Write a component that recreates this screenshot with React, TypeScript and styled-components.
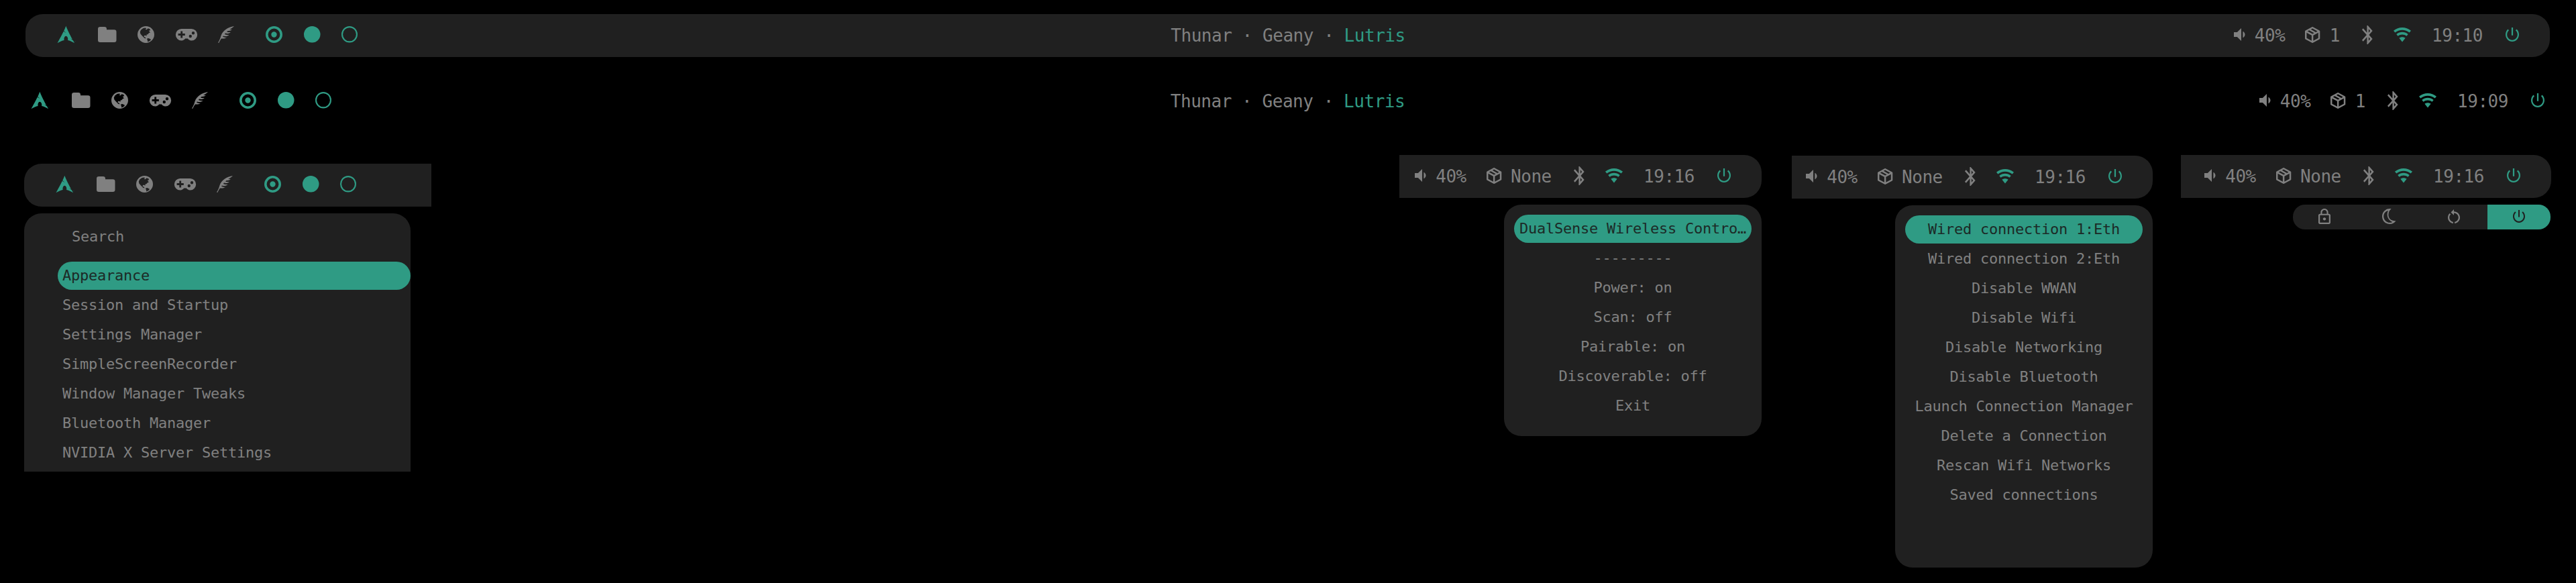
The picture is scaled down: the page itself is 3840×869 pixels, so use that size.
import React from "react";
import styled, { createGlobalStyle } from "styled-components";
import { SiArchlinux } from "react-icons/si";

const PANEL = "#202020";
const GREY = "#808080";
const ACCENT = "#2f9b84";

const GlobalStyle = createGlobalStyle`
  * { box-sizing: border-box; }
  html, body { margin: 0; background: #000; }
  body { font-family: "DejaVu Sans Mono", monospace; color: ${GREY}; }
`;

const Desktop = styled.main`
  width: 3840px;
  height: 869px;
  padding-top: 21px;
  overflow: hidden;
  background: #000;
`;

type Ends = "both" | "left" | "right" | "none";
const corner: Record<Ends, string> = {
  both: "26px",
  left: "26px 0 0 26px",
  right: "0 26px 26px 0",
  none: "0",
};

const Bar = styled.header<{ $ends: Ends }>`
  display: grid;
  grid-template-columns: 1fr auto 1fr;
  align-items: center;
  height: 64px;
  padding: 0 46px 0 47px;
  border-radius: ${(p) => corner[p.$ends]};
  background: ${(p) => (p.$ends === "none" ? "transparent" : PANEL)};
  font-size: 26px;
  letter-spacing: -0.46px;
  line-height: 64px;
  white-space: pre;
`;

const FloatingBar = styled(Bar)`
  margin: 0 39px 0 38px;
`;

const FlatBar = styled(Bar)`
  margin: 34px 1px 48px -1px;
`;

const TrayBar = styled(Bar)`
  grid-template-columns: 0 0 1fr;
  padding-left: 0;
`;

const Group = styled.div`
  display: flex;
  align-items: center;
`;

const Tray = styled(Group)`
  grid-column: 3;
  justify-content: flex-end;
`;

const Accent = styled.span`
  color: ${ACCENT};
`;

const Icon = styled.svg<{ $gap?: number; $accent?: boolean }>`
  flex: none;
  display: block;
  margin: 0 0 3px ${(p) => p.$gap ?? 0}px;
  fill: currentColor;
  color: ${(p) => (p.$accent ? ACCENT : "inherit")};
  overflow: visible;
`;

const ArchLogo = styled(SiArchlinux)`
  flex: none;
  width: 28px;
  height: 27px;
  margin-bottom: 3px;
  color: ${ACCENT};
`;

const Label = styled.span<{ $gap: number; $width: number }>`
  flex: none;
  width: ${(p) => p.$width}px;
  margin-left: ${(p) => p.$gap}px;
`;

const Panels = styled.section`
  display: flex;
  align-items: flex-start;
  padding-left: 36px;
`;

const Cluster = styled.div<{ $width: number; $left?: number; $top?: number }>`
  flex: none;
  display: flex;
  flex-direction: column;
  gap: 10px;
  width: ${(p) => p.$width}px;
  margin: ${(p) => p.$top ?? 0}px 0 0 ${(p) => p.$left ?? 0}px;
`;

const Menu = styled.div<{ $height: number }>`
  display: flex;
  flex-direction: column;
  gap: 2px;
  align-self: flex-end;
  width: 384px;
  height: ${(p) => p.$height}px;
  padding: 15px;
  border-radius: 26px;
  background: ${PANEL};
  font-size: 22px;
  letter-spacing: -0.25px;
  text-align: center;
`;

const Launcher = styled(Menu)`
  align-self: flex-start;
  width: 576px;
  padding: 14px 0 0 50px;
  border-radius: 26px 26px 0 0;
  text-align: left;
`;

const Search = styled.div`
  height: 42px;
  margin-bottom: 14px;
  padding-left: 21px;
  line-height: 42px;
`;

const Item = styled.div<{ $active?: boolean }>`
  flex: none;
  height: 42px;
  padding: 0 7px;
  border-radius: 21px;
  background: ${(p) => (p.$active ? ACCENT : "transparent")};
  color: ${(p) => (p.$active ? "#1c2a27" : GREY)};
  line-height: 42px;
  white-space: pre;
`;

const PowerMenu = styled.div`
  display: grid;
  grid-template-columns: repeat(4, 94px);
  justify-content: space-between;
  align-self: flex-end;
  width: 384px;
  height: 37px;
  margin-right: 1px;
  border-radius: 18px;
  background: ${PANEL};
  overflow: hidden;
`;

const PowerCell = styled.div<{ $active?: boolean }>`
  display: flex;
  align-items: center;
  justify-content: center;
  background: ${(p) => (p.$active ? ACCENT : "transparent")};
  color: ${(p) => (p.$active ? "#202020" : GREY)};
`;

type Shape = { box: string; w: number; h: number; d: string };

const shapes = {
  folder: {
    box: "0 0 27.5 23", w: 27.5, h: 23,
    d: "M3.4 0H9.6Q13 0 13 3.2V4.2H24.2Q27.5 4.2 27.5 7.4V19.8Q27.5 23 24.2 23H3.4Q0 23 0 19.8V3.2Q0 0 3.4 0Z",
  },
  globe: {
    box: "0 0 25 25", w: 25, h: 25,
    d: "M12.5 0A12.5 12.5 0 1 1 12.5 25A12.5 12.5 0 1 1 12.5 0ZM5.2 5.6L8.6 3.1L11.6 2.6L13.4 3.3L11.6 4.7L13.6 5.3L15.6 3.3L18.4 4.3L19.2 6.4L17.2 6.3L17.8 8.4L19.2 9.2L17 10.3L15.2 12.2L13.6 12.6L13.4 14.8L11.8 13.7L10 14L9.6 16L11.6 16.6L12.4 18.4L10.2 17.8L7 14.6L4.4 11.6L3.8 8.4ZM14 18.4L16.6 18L20 19.8L19 21.4L15.4 23.4L14.8 21Z",
  },
  gamepad: {
    box: "0 0 32 17.5", w: 32, h: 17.5,
    d: "M8.6 0H23.4A8.7 8.7 0 0 1 23.4 17.5C20.8 17.5 19.2 16.3 17.9 14.6H14.1C12.8 16.3 11.2 17.5 8.6 17.5A8.7 8.7 0 0 1 8.6 0ZM7.3 3.4V7.1H3.6V9.9H7.3V13.6H10.1V9.9H13.8V7.1H10.1V3.4ZM21.8 8.8A2.2 2.2 0 1 0 21.8 13.2A2.2 2.2 0 1 0 21.8 8.8ZM26 4.1A2.2 2.2 0 1 0 26 8.5A2.2 2.2 0 1 0 26 4.1Z",
  },
  feather: {
    box: "0 0 24 25", w: 24, h: 25,
    d: "M24 0C15 1.2 7 6.6 4.4 14.4C3.4 18 2 21.4 0 24.6L1.2 25C2.3 22.8 3.4 20.7 4.8 18.4C7.4 18.9 10.6 18.6 13 16.8C10.6 17.2 8.8 16.8 7 15.8L8 14.4C11 15.4 14.2 15 16.4 12.9C13.8 13.4 11.8 13 9.8 12L11 10.6C13.6 11.4 16.6 11 18.8 8.9C16.6 9.3 14.8 9 13 8.4L14.6 6.9C16.8 7.3 19.2 6.9 20.9 4.8C19.6 5.1 18.4 5.1 17.2 4.8C19.4 3.6 22 2.4 24 0Z",
  },
  target: {
    box: "0 0 25 25", w: 25, h: 25,
    d: "M12.5 0A12.5 12.5 0 1 1 12.5 25A12.5 12.5 0 1 1 12.5 0ZM12.5 3.6A8.9 8.9 0 1 0 12.5 21.4A8.9 8.9 0 1 0 12.5 3.6ZM12.5 8.3A4.2 4.2 0 1 1 12.5 16.7A4.2 4.2 0 1 1 12.5 8.3Z",
  },
  disc: { box: "0 0 24 24", w: 24.5, h: 24.5, d: "M12 0A12 12 0 1 1 12 24A12 12 0 1 1 12 0Z" },
  ring: {
    box: "0 0 24 24", w: 24, h: 24.5,
    d: "M12 0A12 12 0 1 1 12 24A12 12 0 1 1 12 0ZM12 2.1A9.9 9.9 0 1 0 12 21.9A9.9 9.9 0 1 0 12 2.1Z",
  },
  speaker: {
    box: "5 4 13.5 16", w: 16.5, h: 19,
    d: "M5 9v6h4l5 5V4L9 9H5zM16 7.97v8.05c1.48-.73 2.5-2.25 2.5-4.02 0-1.77-1.02-3.29-2.5-4.03z",
  },
  box: {
    box: "3 2 18 20", w: 22.3, h: 24,
    d: "M21 16.5C21 16.88 20.79 17.21 20.47 17.38L12.57 21.82C12.41 21.94 12.21 22 12 22C11.79 22 11.59 21.94 11.43 21.82L3.53 17.38C3.21 17.21 3 16.88 3 16.5V7.5C3 7.12 3.21 6.79 3.53 6.62L11.43 2.18C11.59 2.06 11.79 2 12 2C12.21 2 12.41 2.06 12.57 2.18L20.47 6.62C20.79 6.79 21 7.12 21 7.5V16.5M12 4.15L10.11 5.22L16 8.61L17.96 7.5L12 4.15M6.04 7.5L12 10.85L13.96 9.75L8.08 6.35L6.04 7.5M5 15.91L11 19.29V12.58L5 9.21V15.91M19 15.91V9.21L13 12.58V19.29L19 15.91Z",
  },
  bluetooth: {
    box: "5 2 12.71 20", w: 15.7, h: 28,
    d: "M17.71 7.71L12 2h-1v7.59L6.41 5 5 6.41 10.59 12 5 17.59 6.41 19 11 14.41V22h1l5.71-5.71-4.3-4.29 4.3-4.29zM13 5.83l1.88 1.88L13 9.59V5.83zm1.88 10.46L13 18.17v-3.76l1.88 1.88z",
  },
  wifi: {
    box: "0 0 26 21.5", w: 26, h: 21.5,
    d: "M0 4.7C7.4 -1.6 18.6 -1.6 26 4.7L23.7 7.5C17.6 2.4 8.4 2.4 2.3 7.5ZM4.3 10C9.4 5.8 16.6 5.8 21.7 10L19.5 12.8C15.6 9.8 10.4 9.8 6.5 12.8ZM8.4 15.8C11 13.8 15 13.8 17.6 15.8L13 21.5Z",
  },
  power: {
    box: "3 3 18 18", w: 20, h: 21,
    d: "M13 3h-2v10h2V3zm4.83 2.17l-1.42 1.42C17.99 7.86 19 9.81 19 12c0 3.87-3.13 7-7 7s-7-3.13-7-7c0-2.19 1.01-4.14 2.58-5.42L6.17 5.17C4.23 6.82 3 9.26 3 12c0 4.97 4.03 9 9 9s9-4.03 9-9c0-2.74-1.23-5.18-3.17-6.83z",
  },
  lock: {
    box: "4 1 16 21", w: 18, h: 23,
    d: "M12 17c1.1 0 2-.9 2-2s-.9-2-2-2-2 .9-2 2 .9 2 2 2zm6-9h-1V6c0-2.76-2.24-5-5-5S7 3.24 7 6v2H6c-1.1 0-2 .9-2 2v10c0 1.1.9 2 2 2h12c1.1 0 2-.9 2-2V10c0-1.1-.9-2-2-2zM8.9 6c0-1.71 1.39-3.1 3.1-3.1s3.1 1.39 3.1 3.1v2H8.9V6zM18 20H6V10h12v10z",
  },
  moon: {
    box: "0 0 20.5 23", w: 20.5, h: 23,
    d: "M13.6 0.3C5.8 -1 0 4.6 0 11.5C0 18.4 5.4 23 11.4 23C15.2 23 18.4 21.4 20.5 18.2C13.4 18.6 9.4 14.4 9.4 9.2C9.4 5.4 11 2.2 13.6 0.3ZM8.9 2.9C6.2 8.6 7.6 17 15.4 19.9C8.6 22.8 2.2 18 2.2 11.5C2.2 7.4 4.8 3.9 8.9 2.9Z",
  },
  restart: {
    box: "4 2 16 19", w: 18, h: 21,
    d: "M12 5V2L8 6l4 4V7c3.31 0 6 2.69 6 6 0 2.97-2.17 5.43-5 5.91v2.02c3.95-.49 7-3.85 7-7.93 0-4.42-3.58-8-8-8zM6 13c0-1.65.67-3.15 1.76-4.24L6.34 7.34C4.9 8.79 4 10.79 4 13c0 4.08 3.05 7.44 7 7.93v-2.02c-2.83-.48-5-2.94-5-5.91z",
  },
} satisfies Record<string, Shape>;

type GlyphProps = { name: keyof typeof shapes; gap?: number; accent?: boolean; scale?: number };

function Glyph({ name, gap, accent, scale = 1 }: GlyphProps) {
  const s = shapes[name];
  return (
    <Icon
      viewBox={s.box}
      width={s.w * scale}
      height={s.h * scale}
      preserveAspectRatio="none"
      $gap={gap}
      $accent={accent}
      aria-hidden
    >
      <path fillRule="evenodd" d={s.d} />
    </Icon>
  );
}

function Shortcuts() {
  return (
    <Group>
      <ArchLogo />
      <Glyph name="folder" gap={32.5} />
      <Glyph name="globe" gap={32} />
      <Glyph name="gamepad" gap={31.5} />
      <Glyph name="feather" gap={31.5} />
      <Glyph name="target" gap={47} accent />
      <Glyph name="disc" gap={32} accent />
      <Glyph name="ring" gap={31.5} accent />
    </Group>
  );
}

function Windows() {
  return (
    <span>
      Thunar · Geany · <Accent>Lutris</Accent>
    </span>
  );
}

function Status({ updates, time }: { updates: string; time: string }) {
  return (
    <Tray>
      <Glyph name="speaker" />
      <Label $gap={14.5} $width={45.5}>40%</Label>
      <Glyph name="box" gap={30} />
      <Label $gap={14} $width={updates.length * 15.2}>{updates}</Label>
      <Glyph name="bluetooth" gap={33} />
      <Glyph name="wifi" gap={31.5} accent />
      <Label $gap={31} $width={76}>{time}</Label>
      <Glyph name="power" gap={34} accent />
    </Tray>
  );
}

const apps = [
  "Appearance",
  "Session and Startup",
  "Settings Manager",
  "SimpleScreenRecorder",
  "Window Manager Tweaks",
  "Bluetooth Manager",
  "NVIDIA X Server Settings",
];

const bluetooth = [
  "DualSense Wireless Contro…",
  "---------",
  "Power: on",
  "Scan: off",
  "Pairable: on",
  "Discoverable: off",
  "Exit",
];

const network = [
  "Wired connection 1:Eth",
  "Wired connection 2:Eth",
  "Disable WWAN",
  "Disable Wifi",
  "Disable Networking",
  "Disable Bluetooth",
  "Launch Connection Manager",
  "Delete a Connection",
  "Rescan Wifi Networks",
  "Saved connections",
];

const Items = ({ labels }: { labels: string[] }) => (
  <>
    {labels.map((label, i) => (
      <Item key={label} $active={i === 0}>{label}</Item>
    ))}
  </>
);

export default function App() {
  return (
    <Desktop>
      <GlobalStyle />
      <FloatingBar $ends="both">
        <Shortcuts />
        <Windows />
        <Status updates="1" time="19:10" />
      </FloatingBar>
      <FlatBar $ends="none">
        <Shortcuts />
        <Windows />
        <Status updates="1" time="19:09" />
      </FlatBar>
      <Panels>
        <Cluster $width={607} $top={13}>
          <Bar $ends="left">
            <Shortcuts />
          </Bar>
          <Launcher $height={385}>
            <Search>Search</Search>
            <Items labels={apps} />
          </Launcher>
        </Cluster>
        <Cluster $width={540} $left={1443}>
          <TrayBar $ends="right">
            <Status updates="None" time="19:16" />
          </TrayBar>
          <Menu $height={345}>
            <Items labels={bluetooth} />
          </Menu>
        </Cluster>
        <Cluster $width={538} $left={45} $top={1}>
          <TrayBar $ends="right">
            <Status updates="None" time="19:16" />
          </TrayBar>
          <Menu $height={540}>
            <Items labels={network} />
          </Menu>
        </Cluster>
        <Cluster $width={552} $left={42}>
          <TrayBar $ends="right">
            <Status updates="None" time="19:16" />
          </TrayBar>
          <PowerMenu>
            <PowerCell><Glyph name="lock" /></PowerCell>
            <PowerCell><Glyph name="moon" /></PowerCell>
            <PowerCell><Glyph name="restart" /></PowerCell>
            <PowerCell $active><Glyph name="power" scale={0.9} /></PowerCell>
          </PowerMenu>
        </Cluster>
      </Panels>
    </Desktop>
  );
}
